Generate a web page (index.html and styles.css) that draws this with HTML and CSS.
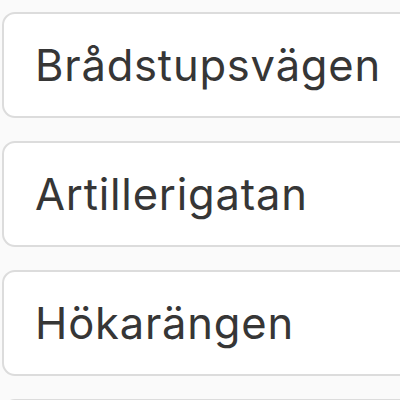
FILE: index.html
```html
<!DOCTYPE html>
<html>
<head>
<meta charset="utf-8">
<link rel="stylesheet" href="styles.css">
</head>
<body>
<div class="list">
  <div class="card">Brådstupsvägen</div>
  <div class="card">Artillerigatan</div>
  <div class="card">Hökarängen</div>
  <div class="card"></div>
</div>
</body>
</html>
```
FILE: styles.css
```css
html, body {
  margin: 0;
  padding: 0;
  background: #fafafa;
  overflow: hidden;
}
.list {
  display: flex;
  flex-direction: column;
  gap: 23px;
  padding: 12px 0 0 2px;
  width: 420px;
}
.card {
  box-sizing: border-box;
  height: 106px;
  border: 2px solid #dcdcdc;
  border-radius: 13px;
  background: #ffffff;
  display: flex;
  align-items: center;
  padding-left: 31px;
  font-family: Inter, "Noto Sans", sans-serif;
  font-size: 43.5px;
  font-weight: 400;
  letter-spacing: 0.8px;
  color: #363636;
  white-space: nowrap;
}
```
